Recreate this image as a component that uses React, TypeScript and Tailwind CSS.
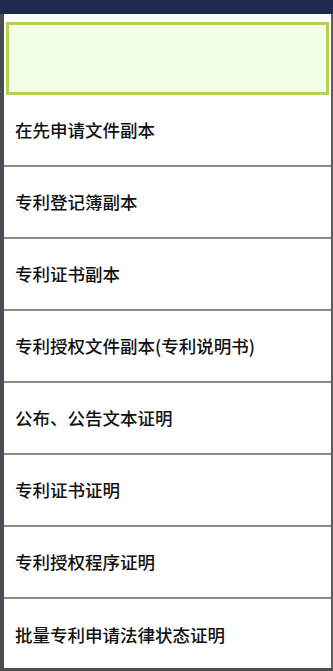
import React from 'react';

const ITEMS = [
  '在先申请文件副本',
  '专利登记簿副本',
  '专利证书副本',
  '专利授权文件副本(专利说明书)',
  '公布、公告文本证明',
  '专利证书证明',
  '专利授权程序证明',
  '批量专利申请法律状态证明',
];

export default function App() {
  return (
    <div
      className="w-[333px] h-[671px] overflow-hidden flex flex-col bg-[#4b4d52]"
      style={{ fontFamily: '"Noto Sans CJK SC", "Noto Sans", sans-serif' }}
    >
      <div className="h-[14px] shrink-0 bg-[#1f2a4f]" />
      <div className="flex flex-1 min-h-0">
        <div className="w-[4px] shrink-0 bg-[#4b4d52]" />
        <div className="flex-1 min-w-0 bg-white flex flex-col pt-[8px] mb-[3px]">
          <div className="h-[73px] shrink-0 mx-[2px] border-[3px] border-[#b6d050] bg-[#f4ffe8]" />
          {ITEMS.map((item, i) => (
            <div
              key={item}
              className={
                'h-[72px] shrink-0 flex items-center pl-[11px] text-[17.5px] font-medium text-[#111] ' +
                (i < ITEMS.length - 1 ? 'border-b-2 border-[#8a8a8a]' : '')
              }
            >
              {item}
            </div>
          ))}
        </div>
        <div className="w-[2px] shrink-0 bg-[#5a5c60]" />
      </div>
    </div>
  );
}
